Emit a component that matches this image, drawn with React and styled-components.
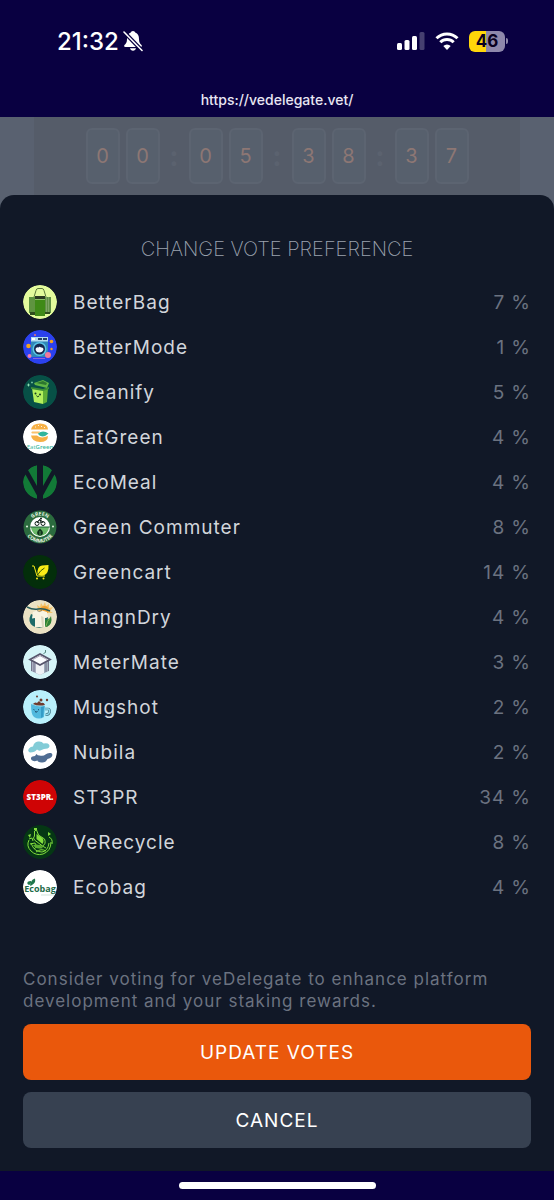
import React from "react";
import styled, { createGlobalStyle } from "styled-components";

const BetterBagLogo = () => (
  <>
    <circle cx="17" cy="17" r="17" fill="#e3fb9c" />
    <path d="M6 12h6v16H6z" fill="#5f9440" />
    <path d="M22 12h6v16h-6z" fill="#5f8f45" />
    <path d="M23 12h1v16h-1zM25 12h1v16h-1z" fill="#7ea565" />
    <path d="M7 27h5v3H7zM22 27h5v2h-5z" fill="#2e4d1c" />
    <path d="M12 11h10v20H12z" fill="#3f8a17" />
    <path d="M12 11h10v3H12z" fill="#2b3a22" />
    <path d="M12 14h10v1H12z" fill="#8fc26a" />
    <path d="M11 12L13 5.500q.5-2 2-2h4q1.500 0 2 2L23 12" fill="none" stroke="#5b7a3a" strokeWidth="1" />
  </>
);

const BetterModeLogo = () => (
  <>
    <circle cx="17" cy="17" r="17" fill="#2b41ee" />
    <path d="M8 7h17v20H8z" fill="#2f86b8" />
    <path d="M8 7h17v4.500H8z" fill="#b4dcef" />
    <path d="M15 8h4v2h-4zM20 8h4v2h-4z" fill="#243d66" />
    <path d="M9 8h3v2H9z" fill="#fff" />
    <circle cx="16.500" cy="19" r="7" fill="#5bc4e6" />
    <circle cx="16.500" cy="19" r="5.500" fill="#14264f" />
    <path d="M12.500 19q1-2.500 3-1.500 1-1.500 2.500 0 2.500-.5 2.500 2-1 3-4 3-3.500 0-4-3.500z" fill="#f4f8ff" />
    <circle cx="5.500" cy="16" r="2.300" fill="#f3a31d" />
    <circle cx="28.500" cy="11.500" r="1.800" fill="#f3a31d" />
    <circle cx="28.500" cy="19" r="1.200" fill="#f3a31d" />
    <circle cx="12" cy="5" r="1" fill="#e8746a" />
    <circle cx="6.500" cy="26" r="2" fill="#ef7fb0" />
    <circle cx="25" cy="25" r="3" fill="#f2799a" />
    <path d="M10 28h12v1H10z" fill="#8c62dc" />
  </>
);

const CleanifyLogo = () => (
  <>
    <circle cx="17" cy="17" r="17" fill="#075046" />
    <path d="M9 13l11 2v14l-9-2z" fill="#b3ef5c" />
    <path d="M20 15l5-2-1 14-4 2z" fill="#5fae35" />
    <path d="M8 12l12 2 6-2v2l-6 2-12-2z" fill="#3c8e35" />
    <path d="M11 8l9-3 6 3-2 5-12-3z" fill="#60b545" />
    <path d="M13 8l7-2 4 2-1 2z" fill="#2d762f" />
    <circle cx="12.500" cy="18.500" r="1" fill="#173d21" />
    <circle cx="17" cy="19.500" r="1" fill="#173d21" />
    <path d="M13.500 20.500q1 2.500 2.500.5" fill="none" stroke="#173d21" strokeWidth="1" />
    <path d="M5.500 8l.6 1.400 1.400.6-1.400.6-.6 1.400-.6-1.400L3.500 10l1.400-.6zM9 6l.4 1 .9.400-.9.400L9 9l-.4-1.200-.9-.4.9-.4z" fill="#8fe0b4" />
  </>
);

const EatGreenLogo = () => (
  <>
    <circle cx="17" cy="17" r="17" fill="#fff" />
    <path d="M8 9.500Q9 3.500 17 3.500t8 6z" fill="#f7b045" />
    <path d="M12 7h1M15 5.500h1M18 6.500h1M21 7.500h1" stroke="#fff3dc" strokeWidth="1" />
    <path d="M9 11.500h8l-1 2h-7q-1.500-1 0-2z" fill="#f9c26c" />
    <path d="M15 13.500q5-4 10.500 0-4 4-8 2.500-2-1-2.500-2.500z" fill="#30b59c" />
    <path d="M8 15.500h6q4 3.500 11 .5 0 6-8 6t-9-6.500z" fill="#f7b045" />
    <LogoText x="17" y="29" fontSize="6" fill="#35b69b" textAnchor="middle">
      Eat<tspan fontWeight="600">Green</tspan>
    </LogoText>
  </>
);

const EcoMealLogo = () => (
  <g fill="#127a37">
    <path d="M14 0v21L5 5Q8.500 1.200 14 0z" />
    <path d="M20 0v21L29 5Q25.500 1.200 20 0z" />
    <path d="M2.500 9.500L14 30.500V34Q1 31 0 17q0-4 2.500-7.500z" />
    <path d="M31.500 9.500L20 30.500V34Q33 31 34 17q0-4-2.500-7.500z" />
  </g>
);

const GreenCommuterLogo = () => (
  <>
    <circle cx="17" cy="17" r="16.500" fill="#2b6b3e" />
    <circle cx="17" cy="17" r="10" fill="#fff" />
    <path d="M8 17h18a9 9 0 01-18 0z" fill="#69b968" />
    <path d="M7 17h20" stroke="#1d6234" strokeWidth="1" />
    <g fill="none" stroke="#10201a" strokeWidth="1">
      <circle cx="14" cy="13.500" r="2" />
      <circle cx="20" cy="13.500" r="2" />
      <path d="M14 13l2-3 3 1 1 2M16 10l2-1.500M17 13l1-2" />
    </g>
    <circle cx="18" cy="8.500" r="1" fill="#10201a" />
    <path d="M17 18.500q-3 2.500-3 4.500t3 3q3-1 3-3t-3-4.500z" fill="#10301c" />
    <path d="M17 21v5" stroke="#69b968" strokeWidth=".7" />
    <path id="commuter-top" d="M5.500 17a11.500 11.500 0 0123 0" fill="none" />
    <path id="commuter-bottom" d="M1.500 17a15.500 15.500 0 0031 0" fill="none" />
    <LogoText fontSize="5" fontWeight="700" fill="#e6f5e3" textAnchor="middle">
      <textPath href="#commuter-top" startOffset="50%">GREEN</textPath>
    </LogoText>
    <LogoText fontSize="5" fontWeight="700" fill="#e6f5e3" textAnchor="middle">
      <textPath href="#commuter-bottom" startOffset="50%">COMMUTER</textPath>
    </LogoText>
    <circle cx="4" cy="16.500" r="1" fill="#e6f5e3" />
    <circle cx="30" cy="16.500" r="1" fill="#e6f5e3" />
  </>
);

const GreencartLogo = () => (
  <>
    <circle cx="17" cy="17" r="17" fill="#032e0a" />
    <path d="M25.500 10q.5 9-5 10.500-4 .5-6-1Q14 11 19 10.500z" fill="#f8ec16" />
    <path d="M9 11h2l3 10h8" fill="none" stroke="#f8ec16" strokeWidth="1" />
    <path d="M14.500 20q3-5 7-7" fill="none" stroke="#032e0a" strokeWidth=".8" />
    <circle cx="14" cy="23.500" r="1" fill="#f8ec16" />
    <circle cx="20.500" cy="23.500" r="1" fill="#f8ec16" />
  </>
);

const HangnDryLogo = () => (
  <>
    <circle cx="17" cy="17" r="17" fill="#ebe2c4" />
    <path d="M15 9l-1-4 3 2 1-4 2 3 2-4 1 4 3-2v4l4-1-3 4 3 2H16z" fill="#f5c46a" />
    <circle cx="21.500" cy="10" r="4" fill="#f0a032" />
    <path d="M8 14q-4 8 2 12 7 4 14-1l1-8q-3 2-8 1z" fill="#1d6a68" />
    <path d="M22 20q5-1 6-4 2 8-4 11l-4-1z" fill="#2f8237" />
    <path d="M4 7q6 3 11 2t12 2" fill="none" stroke="#245a5a" strokeWidth="1.400" />
    <path d="M10 12l4-1.500q2 2 5 0l5 1.500 1 5-3 1V27H12v-9l-3 .5z" fill="#f7f4e3" />
    <path d="M18 16l1 11h2l-.5-10z" fill="#dcd8c0" />
    <path d="M14 10.500q2 2 5 0" fill="none" stroke="#6b6a50" strokeWidth=".7" />
    <path d="M23 26q1-5 4-8" fill="none" stroke="#8dbb5c" strokeWidth=".8" />
  </>
);

const MeterMateLogo = () => (
  <>
    <circle cx="17" cy="17" r="17" fill="#d5f4f7" />
    <path d="M8 14l9 5v11l-9-4z" fill="#a9adc0" />
    <path d="M26 14l-9 5v11l9-4z" fill="#9eabb9" />
    <path d="M13 18l4 2 4-2v10l-4 2-4-2z" fill="#eef1f5" />
    <path d="M8.500 16v10M11 17.500V27M23 17.500V27M25.500 16v10" stroke="#74758c" strokeWidth="1" />
    <path d="M7 14.500l10-5.500 10 5.500L17 20z" fill="#fbfdff" stroke="#57556c" strokeWidth="1.800" />
    <path d="M10 14.500l7-3.800 7 3.800" fill="none" stroke="#9c91a7" strokeWidth=".8" />
    <path d="M20.500 8.500l2-1V5" fill="none" stroke="#55867f" strokeWidth="1" />
  </>
);

const MugshotLogo = () => (
  <>
    <circle cx="17" cy="17" r="17" fill="#b9f0fb" />
    <path d="M22 19h3q2 0 1.500 3-.5 3-4 2.500" fill="none" stroke="#447886" strokeWidth="2.600" />
    <path d="M22 19h3q2 0 1.500 3-.5 3-4 2.500" fill="none" stroke="#8cdcf0" strokeWidth="1.300" />
    <path d="M8 14l14 2-1 11q-5 3-10 0-3-2-3-13z" fill="#51b9de" />
    <path d="M8 14q7-3 14 1.500-6 2.500-14-1.500z" fill="#a3e2f2" />
    <path d="M10 14q2-2.500 4-1l2-2 2 2q3-1 4 2-7 1.500-12-1z" fill="#6f3b2d" />
    <path d="M18 17l3-.5-1 10-2 1.500z" fill="#349cc6" />
    <circle cx="14" cy="6.500" r="1" fill="#6f3b2d" />
    <circle cx="18" cy="10" r="1.500" fill="#6f3b2d" />
    <circle cx="24" cy="10" r="1.200" fill="#6f3b2d" />
    <path d="M10.500 19.500l1 .5M15 20l1-.5M12 21.500q1 1.200 2.500 0" fill="none" stroke="#183e5b" strokeWidth="1" />
  </>
);

const NubilaLogo = () => (
  <>
    <circle cx="17" cy="17" r="17" fill="#fff" />
    <path d="M7 17.500q-3-1.500-1-4 1.500-2 4-2 1-4.500 5-5t5.500 2q4-1 5.500 1 1.500 2.500-1.500 4-4 0-6 1.500-2.500 1.500-4.500-.5-2 3-7 3z" fill="#83ccd7" />
    <path d="M28 18q2.500 1.500.5 4-1.500 1.500-4 2-2 4-6 3.500t-4-2q-4 1.500-6-.5-1.500-2.500 1-3.500 3 0 4-2.500 1 1.500 3 1.500 4 1 6-1 2-2 5.500-1.500z" fill="#4f6d93" />
  </>
);

const St3prLogo = () => (
  <>
    <circle cx="17" cy="17" r="17" fill="#cf0405" />
    <LogoText x="17" y="20" fontSize="8" fontWeight="900" fill="#fff" textAnchor="middle">ST3PR.</LogoText>
  </>
);

const VeRecycleLogo = () => (
  <>
    <circle cx="17" cy="17" r="17" fill="#053714" />
    <g fill="none" stroke="#82dc3d" strokeWidth="1">
      <path d="M6 15q-3 6 2 11 5 5 12 3 8-3 8-12" />
      <path d="M8 18q3 9 11 9 6-1 7-9" />
      <path d="M11.500 6v5q-2 2 0 4l8 6q4-2 2-7l-6-4-2-5z" />
      <path d="M7 19l5-1 2 4M11 24q5-6 12-1M13 27q5-4 10-1M26 12q4 2 3 7M6 14l3-1 1 3" />
    </g>
    <path d="M13.500 9l6 4q2 3 0 6l-6-5zM11 3h3v2h-3zM5 10l3-1-1 4zM25 7l3 2-3 2z" fill="#82dc3d" />
    <path d="M10 20q6-2 10 3-7 2-10-3z" fill="#5aad31" />
  </>
);

const EcobagLogo = () => (
  <>
    <circle cx="17" cy="17" r="17" fill="#fff" />
    <path d="M4.500 14q-1-3 3.500-3 .5 3-2 4zM8 15q-1-5 4-6.500 1 4.500-3 6.500z" fill="#20764b" />
    <path d="M6 13q2 1 2 3" stroke="#20764b" fill="none" />
    <LogoText x="17" y="22" fontSize="9" fontWeight="700" fill="#1f6b49" textAnchor="middle">Ecobag</LogoText>
    <path d="M18 25h13" stroke="#bdd8ca" strokeWidth=".7" />
  </>
);

const apps = [
  { name: "BetterBag", vote: 7, Logo: BetterBagLogo },
  { name: "BetterMode", vote: 1, Logo: BetterModeLogo },
  { name: "Cleanify", vote: 5, Logo: CleanifyLogo },
  { name: "EatGreen", vote: 4, Logo: EatGreenLogo },
  { name: "EcoMeal", vote: 4, Logo: EcoMealLogo },
  { name: "Green Commuter", vote: 8, Logo: GreenCommuterLogo },
  { name: "Greencart", vote: 14, Logo: GreencartLogo },
  { name: "HangnDry", vote: 4, Logo: HangnDryLogo },
  { name: "MeterMate", vote: 3, Logo: MeterMateLogo },
  { name: "Mugshot", vote: 2, Logo: MugshotLogo },
  { name: "Nubila", vote: 2, Logo: NubilaLogo },
  { name: "ST3PR", vote: 34, Logo: St3prLogo },
  { name: "VeRecycle", vote: 8, Logo: VeRecycleLogo },
  { name: "Ecobag", vote: 4, Logo: EcobagLogo },
];

const countdown = ["00", "05", "38", "37"];

const StatusBar = () => (
  <Status>
    <Clock>
      21:32
      <svg width="20" height="22" viewBox="0 0 20 22">
        <path d="M10 1c-1.300 0-2 .8-2.200 1.500C5 3.500 4 5.800 4 9c0 3.500-1 4.500-2.500 6-.8 1-.3 2 1 2h15c1.300 0 1.800-1 1-2C17 13.500 16 12.500 16 9c0-3.200-1-5.500-3.800-6.500C12 1.800 11.300 1 10 1zM7 18.300h6c-.3 1.600-1.500 2.500-3 2.500s-2.700-.9-3-2.500z" fill="#fff" />
        <path d="M1 2l18 18.500" stroke="#090041" strokeWidth="4" />
        <path d="M1 2l18 18.500" stroke="#fff" strokeWidth="1.600" strokeLinecap="round" />
      </svg>
    </Clock>
    <Indicators>
      <svg width="28" height="20" viewBox="0 0 28 20" fill="#fff">
        <rect x="0" y="12" width="5" height="7" rx="1.500" />
        <rect x="7.500" y="9" width="5" height="10" rx="1.500" />
        <rect x="15" y="5" width="5" height="14" rx="1.500" />
        <rect x="22.500" y="1" width="5" height="18" rx="1.500" opacity=".25" />
      </svg>
      <svg width="24" height="18" viewBox="0 0 24 18">
        <path d="M1.500 6.200a15 15 0 0121 0M5.300 10.200a9.600 9.600 0 0113.400 0" fill="none" stroke="#fff" strokeWidth="3" />
        <path d="M12 18l-3.700-3.900a5.300 5.300 0 017.400 0z" fill="#fff" />
      </svg>
      <Battery>
        <BatteryBody>46</BatteryBody>
        <BatteryTip />
      </Battery>
    </Indicators>
  </Status>
);

export default () => (
  <Page>
    <GlobalStyle />
    <Header>
      <StatusBar />
      <Address href="https://vedelegate.vet/">https://vedelegate.vet/</Address>
    </Header>
    <Backdrop>
      <Countdown>
        {countdown.map((pair, i) => (
          <React.Fragment key={i}>
            {i > 0 && <Colon>:</Colon>}
            <Pair>
              {pair.split("").map((digit, j) => (
                <Digit key={j}>{digit}</Digit>
              ))}
            </Pair>
          </React.Fragment>
        ))}
      </Countdown>
    </Backdrop>
    <Sheet>
      <Title>CHANGE VOTE PREFERENCE</Title>
      <VoteList>
        {apps.map(({ name, vote, Logo }) => (
          <VoteRow key={name}>
            <AppLogo viewBox="0 0 34 34" aria-hidden="true">
              <Logo />
            </AppLogo>
            <AppName htmlFor={`vote-${name}`}>{name}</AppName>
            <VoteValue>
              <VoteInput id={`vote-${name}`} inputMode="numeric" defaultValue={vote} />
              <span>%</span>
            </VoteValue>
          </VoteRow>
        ))}
      </VoteList>
      <Actions>
        <Hint>
          Consider voting for veDelegate to enhance platform development and your staking rewards.
        </Hint>
        <Button $primary type="button">UPDATE VOTES</Button>
        <Button type="button">CANCEL</Button>
      </Actions>
    </Sheet>
    <HomeArea>
      <HomeIndicator />
    </HomeArea>
  </Page>
);

const GlobalStyle = createGlobalStyle`
  * {
    box-sizing: border-box;
  }
  body {
    margin: 0;
    background: #596170;
    font-family: Inter, "Liberation Sans", sans-serif;
  }
`;
const LogoText = styled.text`
  font-family: "Open Sans", "Liberation Sans", sans-serif;
  letter-spacing: 0;
`;
const Page = styled.div`
  display: flex;
  flex-direction: column;
  min-height: 100vh;
`;
const Header = styled.header`
  display: flex;
  flex-direction: column;
  align-items: center;
  background: #090041;
  padding: 24px 0 7px;
`;
const Status = styled.div`
  align-self: stretch;
  display: flex;
  align-items: center;
  justify-content: space-between;
  height: 34px;
  padding: 0 46px 0 57px;
`;
const Clock = styled.div`
  display: flex;
  align-items: center;
  gap: 4px;
  color: #fff;
  font-size: 24px;
  font-weight: 500;
`;
const Indicators = styled.div`
  display: flex;
  align-items: center;
  gap: 10px;
`;
const Battery = styled.div`
  display: flex;
  align-items: center;
  gap: 1px;
`;
const BatteryBody = styled.div`
  background: linear-gradient(to right, #ffd60a 48%, #8e88ab 48%);
  border-radius: 6px;
  color: #090020;
  font-size: 17px;
  font-weight: 700;
  line-height: 21px;
  text-align: center;
  width: 36px;
`;
const BatteryTip = styled.div`
  background: #8e88ab;
  border-radius: 0 2px 2px 0;
  height: 6px;
  width: 2px;
`;
const Address = styled.a`
  color: #e8e6f2;
  font-size: 14px;
  font-weight: 500;
  line-height: 20px;
  margin-top: 32px;
  text-decoration: none;
`;
const Backdrop = styled.div`
  padding: 0 34px;
`;
const Countdown = styled.div`
  display: flex;
  align-items: center;
  justify-content: center;
  background: #555c69;
  padding: 11px 0;
`;
const Pair = styled.div`
  display: flex;
  gap: 6px;
`;
const Digit = styled.span`
  background: #57606d;
  border: 2px solid #5c6471;
  border-radius: 6px;
  color: #8d7774;
  font-size: 20px;
  line-height: 52px;
  text-align: center;
  width: 34px;
`;
const Colon = styled.span`
  color: #5b626f;
  font-size: 28px;
  font-weight: 700;
  text-align: center;
  width: 29px;
`;
const Sheet = styled.main`
  flex: 1;
  display: flex;
  flex-direction: column;
  background: #111827;
  border-radius: 14px 14px 0 0;
  padding: 40px 23px 23px;
`;
const Title = styled.h1`
  color: #9ca3af;
  font-size: 20px;
  font-weight: 200;
  line-height: 28px;
  margin: 0;
  text-align: center;
`;
const VoteList = styled.ul`
  display: flex;
  flex-direction: column;
  gap: 11px;
  list-style: none;
  margin: 22px 0 0;
  padding: 0;
`;
const VoteRow = styled.li`
  display: flex;
  align-items: center;
  font-size: 19px;
  font-weight: 400;
  height: 34px;
  letter-spacing: 1px;
`;
const AppLogo = styled.svg`
  border-radius: 50%;
  height: 34px;
  width: 34px;
`;
const AppName = styled.label`
  flex: 1;
  color: #d1d5db;
  margin-left: 16px;
`;
const VoteValue = styled.div`
  display: flex;
  align-items: center;
  color: #6b7280;
  gap: 6px;
`;
const VoteInput = styled.input`
  background: transparent;
  border: 0;
  color: inherit;
  font: inherit;
  letter-spacing: inherit;
  padding: 0;
  text-align: right;
  width: 48px;
`;
const Actions = styled.div`
  display: flex;
  flex-direction: column;
  gap: 12px;
  margin-top: auto;
`;
const Hint = styled.p`
  color: #6b7280;
  font-size: 17px;
  font-weight: 400;
  letter-spacing: 1px;
  line-height: 22px;
  margin: 0;
`;
const Button = styled.button`
  background: ${({ $primary }) => ($primary ? "#ea580c" : "#374151")};
  border: 0;
  border-radius: 8px;
  color: #fff;
  font-family: inherit;
  font-size: 19px;
  font-weight: 400;
  height: 56px;
  letter-spacing: 1px;
`;
const HomeArea = styled.footer`
  display: flex;
  align-items: center;
  justify-content: center;
  background: #090041;
  height: 29px;
`;
const HomeIndicator = styled.div`
  background: #fff;
  border-radius: 4px;
  height: 7px;
  width: 197px;
`;
